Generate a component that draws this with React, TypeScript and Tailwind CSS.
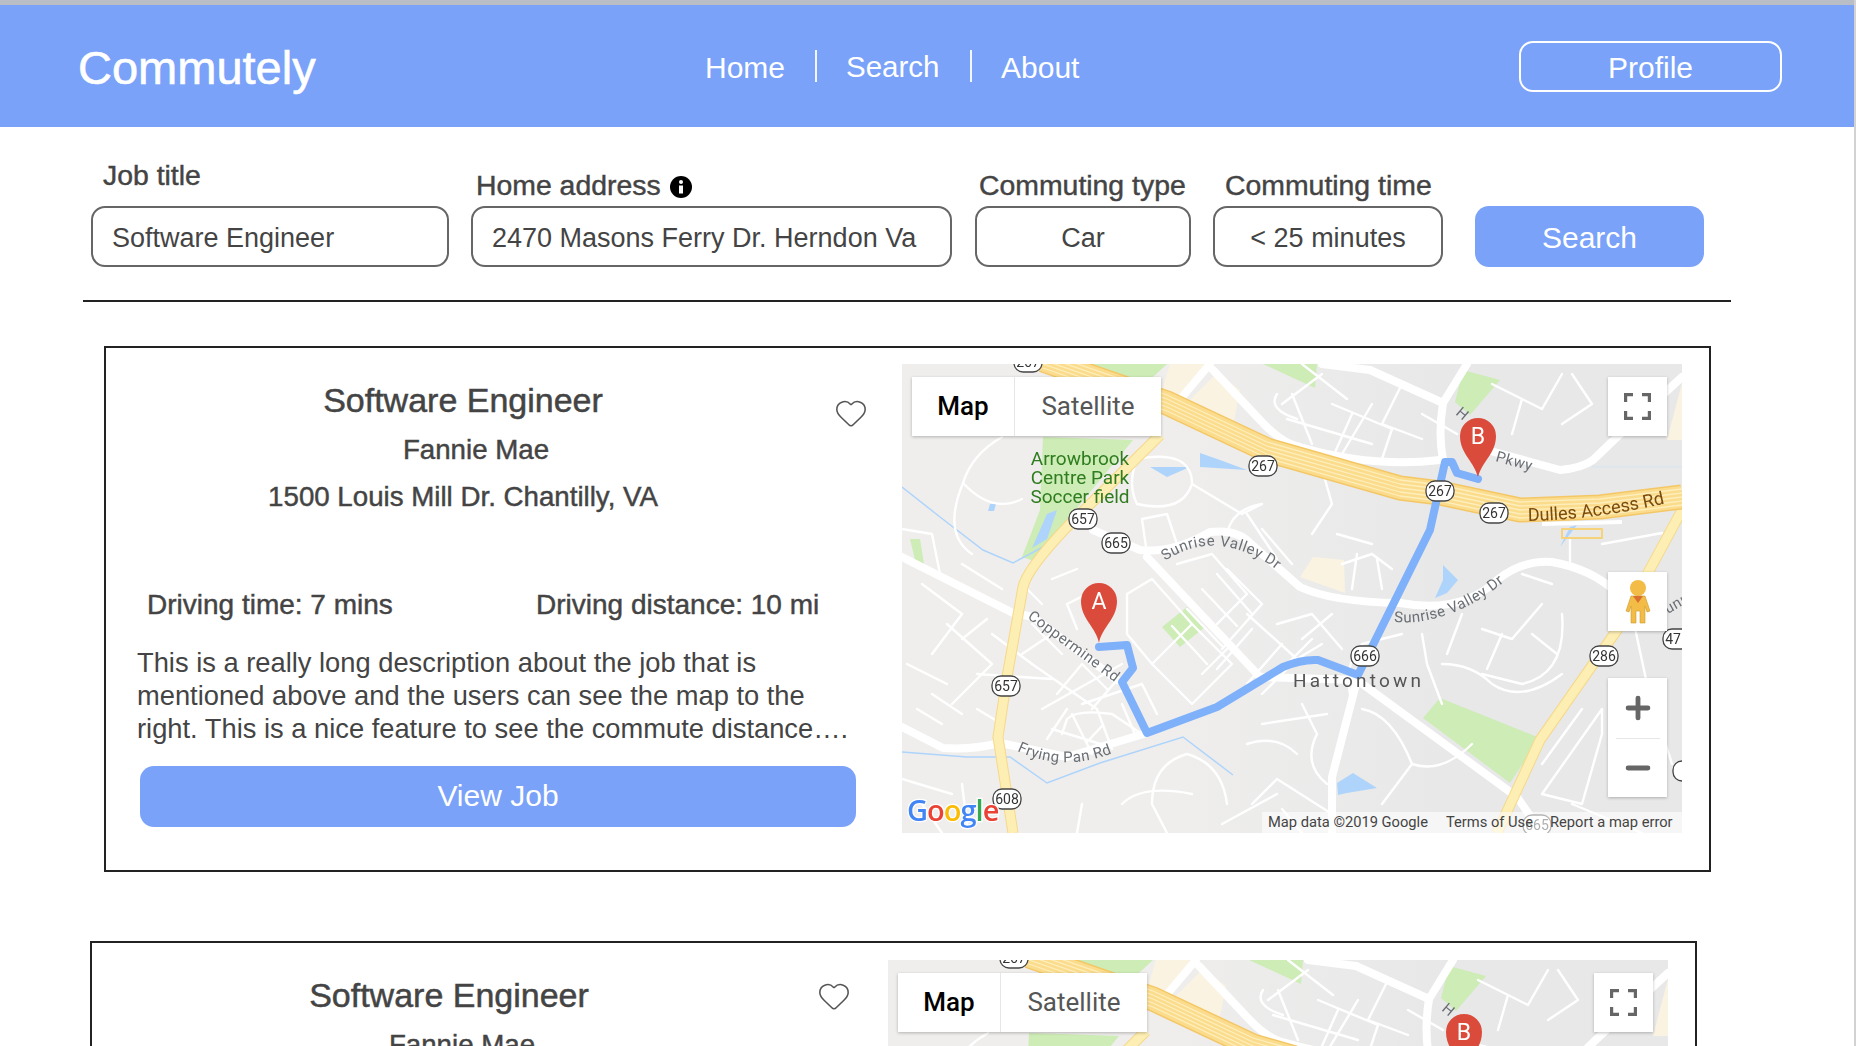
import React from 'react';
import { Heart, Plus, Minus } from 'lucide-react';

const SHIELDS: [number, number, string][] = [
  [126, -2, '267'],
  [181, 155, '657'],
  [214, 179, '665'],
  [361, 102, '267'],
  [463, 292, '666'],
  [104, 322, '657'],
  [105, 435, '608'],
  [538, 127, '267'],
  [592, 149, '267'],
  [702, 292, '286'],
  [775, 275, '471'],
  [785, 407, '5'],
  [635, 461, '665'],
];

// main white roads
const ROADS = [
  'M0 193 L111 249 L131 253 L215 316',
  'M191 166 L238 186 Q270 190 308 168 Q335 165 348 179 L398 223 Q430 238 498 239',
  'M498 239 Q560 250 595 216 Q620 196 650 198 Q690 205 715 229',
  'M245 193 L358 313',
  'M358 313 L455 316',
  'M455 316 L615 433 L640 469',
  'M0 363 L41 384 Q70 386 98 379 L165 393 L245 369',
  'M455 316 L430 413 L430 469',
  'M308 0 L275 39',
  'M311 6 L358 56 Q380 80 398 83 Q470 104 538 96',
  'M468 6 L541 39 L565 0',
  'M541 39 Q536 70 541 96',
  'M585 86 L658 106 Q680 104 691 96 L715 73 L780 13',
  'M420 0 L468 6',
];

// thin side streets, just enough to read as a neighbourhood
const STREETS = [
  'M61 119 Q40 170 70 190 M61 119 Q70 90 100 73 M61 119 Q90 150 120 135',
  'M0 165 L30 170 M30 170 L38 210 M38 210 L90 240 M20 220 L60 250 M60 250 L30 290',
  'M60 200 L100 225 M45 260 L90 300 M90 300 L50 340 M75 310 L150 315 M90 270 L130 300',
  'M165 240 L195 225 M165 240 L175 265 M130 300 L195 345 M140 345 L220 300',
  'M225 230 L250 215 L290 260 L250 300 L225 270 Z M250 300 L290 340 M290 260 L330 300 L290 340',
  'M275 200 L310 190 L345 230 L310 265 M325 205 L360 240 L320 285 M345 250 L395 295 L360 330 M395 295 L420 280',
  'M235 95 Q290 85 290 120 Q280 150 235 140 Q225 120 235 95 M290 120 L340 150 L360 140',
  'M240 155 L265 150 L275 180 L245 190 Z M325 170 Q330 145 360 140',
  'M160 370 L165 355 Q175 345 210 350 L240 370 M170 350 L190 390 M195 345 L210 385 M220 340 L235 375',
  'M180 340 L240 320 M215 316 L190 345 M240 320 L255 350',
  'M285 390 Q250 400 250 440 L265 469 M285 390 Q320 400 325 440 M350 440 L375 415 L430 450',
  'M320 460 L375 430 M360 360 L425 350 M400 340 L415 370 Q400 400 425 420',
  'M400 0 L445 35 M375 30 Q365 45 395 55 M430 40 L490 65 L480 95 M450 50 L430 95',
  'M500 20 L480 60 L520 75 M520 50 L555 70',
  'M590 20 L640 45 L660 10 M670 10 L690 40 L660 60 M620 35 L610 70',
  'M668 175 L668 200 M620 210 L650 220',
  'M580 265 L610 275 M610 275 L640 240 M660 250 Q665 310 620 320 L580 310 M540 300 Q570 300 590 320 Q620 340 660 310',
  'M520 270 L525 300 L540 340 M500 270 L460 280 Q440 300 450 340',
  'M460 345 Q490 350 510 400 L480 440 M510 400 Q540 410 570 380',
  'M700 370 L680 440 L640 430 L700 345 Z M670 440 L740 469',
  'M700 180 L760 169 M730 250 L745 320 L770 400',
  'M380 40 L420 10 M385 55 L470 80 M410 80 L390 30 M440 90 L470 40',
  'M300 225 L335 262 M315 210 L350 250 M285 245 L320 282 M270 262 L305 300 M330 280 L300 310 M350 265 L315 305',
  'M375 260 L410 250 L440 285 M400 275 L430 250 M380 280 L345 320 M410 275 L385 300',
  'M180 300 L205 325 M155 330 L180 300 M165 345 L145 375 M200 362 L185 378 M150 365 L205 382',
  'M30 330 L60 350 M5 300 L45 320 M15 345 L40 360 M75 345 L100 360 M60 275 L85 255',
  'M120 290 L150 270 M130 260 L160 290 M140 240 L120 220 M150 215 L175 205',
  'M440 200 L470 190 L490 205 M450 225 L455 190 M475 195 L480 225',
  'M390 200 L360 165 M375 195 L345 150 M410 170 L430 140 L420 105 M435 170 L470 180',
  'M600 270 L585 305 M630 270 L655 290 M560 250 L545 290 M640 400 L680 345',
  'M220 440 Q240 420 290 430 M180 440 L175 469 M345 380 Q375 370 395 390 M380 445 L400 469',
  'M20 440 L40 469 M60 420 L65 460 M0 415 L50 430',
];

const SIDE_POLY = [
  '141,73 231,76 165,156 138,199 120,193 138,146',
  '178,0 265,0 251,13 205,13',
  '361,0 415,0 413,24',
  '561,6 598,16 568,51 553,38',
  '285,243 303,263 278,283 260,263',
  '538,334 638,374 608,419 521,354',
  '8,175 18,175 22,200 14,200',
];

const CREAM_POLY = [
  '268,0 303,0 278,39 258,33',
  '315,9 338,26 331,62 285,39',
  '411,193 442,196 443,229 398,213',
  '780,19 780,76 765,76',
];

const WATER_POLY = [
  '298,89 318,96 345,106 298,103',
  '248,103 288,103 265,113',
  '435,419 451,409 475,424 445,429 436,431',
  '541,201 556,216 545,229 533,234 541,216',
  '675,161 658,183 668,163',
  '145,150 155,146 145,175 130,184',
  '88,140 94,140 92,147 86,147',
];

function Shield({ x, y, label }: { x: number; y: number; label: string }) {
  return (
    <g>
      <rect x={x - 14} y={y - 10} width={28} height={20} rx={9} fill="#fff" stroke="#444" strokeWidth={1.3} />
      <text x={x} y={y + 5} textAnchor="middle" fontFamily="Roboto, sans-serif" fontSize={14} fill="#333">
        {label}
      </text>
    </g>
  );
}

function Marker({ x, y, letter }: { x: number; y: number; letter: string }) {
  return (
    <g>
      <path
        d={`M${x} ${y} C${x - 3} ${y - 16} ${x - 18} ${y - 24} ${x - 18} ${y - 42} A18 18 0 0 1 ${x + 18} ${y - 42} C${x + 18} ${y - 24} ${x + 3} ${y - 16} ${x} ${y} Z`}
        fill="#db4b3b"
      />
      <text x={x} y={y - 34} textAnchor="middle" fontFamily="Roboto, sans-serif" fontSize={23} fill="#fff">
        {letter}
      </text>
    </g>
  );
}

function MapPicture() {
  return (
    <svg width={780} height={469} viewBox="0 0 780 469" className="block blur-[0.35px]">
      <defs>
        <linearGradient id="land" x1="0" x2="1" y1="0" y2="0">
          <stop offset="0.35" stopColor="#efeeed" />
          <stop offset="0.7" stopColor="#e8e8e8" />
        </linearGradient>
        <path id="lbl-sunrise1" d="M263 197 Q310 165 367 200 L400 225" />
        <path id="lbl-copper" d="M125 254 L230 331" />
        <path id="lbl-frying" d="M115 387 Q160 408 208 390 L240 378" />
        <path id="lbl-sunrise2" d="M492 258 Q545 262 597 222 L620 205" />
        <path id="lbl-dulles" d="M626 157 Q690 156 761 140 L790 134" />
        <path id="lbl-pkwy" d="M593 97 L650 113" />
      </defs>
      <rect width={780} height={469} fill="url(#land)" />
      {SIDE_POLY.map((p) => (
        <polygon key={p} points={p} fill="#cdecb6" />
      ))}
      {CREAM_POLY.map((p) => (
        <polygon key={p} points={p} fill="#faf3e1" />
      ))}
      {WATER_POLY.map((p) => (
        <polygon key={p} points={p} fill="#aed4fb" />
      ))}
      <path d="M0 123 L38 153 L81 186 L111 199 L141 183" fill="none" stroke="#aed4fb" strokeWidth={1.5} />
      <path d="M0 388 L65 393 L108 393 L145 419 L198 399 L281 373 L331 411" fill="none" stroke="#aed4fb" strokeWidth={1.5} />
      <path d="M690 103 L780 103" fill="none" stroke="#d3e3f3" strokeWidth={1} />

      <g fill="none" stroke="#fff" strokeWidth={2.4} strokeLinejoin="round" strokeLinecap="round">
        {STREETS.map((d) => (
          <path key={d} d={d} />
        ))}
      </g>
      <g fill="none" stroke="#fff" strokeWidth={8} strokeLinejoin="round" strokeLinecap="round">
        {ROADS.map((d) => (
          <path key={d} d={d} />
        ))}
      </g>

      {/* 657 and 286 */}
      <g fill="none" strokeLinejoin="round">
        <path d="M258 71 L165 163 Q125 205 121 223 L105 313 L96 373 L111 469" stroke="#f6d889" strokeWidth={11} />
        <path d="M258 71 L165 163 Q125 205 121 223 L105 313 L96 373 L111 469" stroke="#fdeeb4" strokeWidth={9} />
        <path d="M780 146 L715 266 L638 376 L595 469" stroke="#f6d889" strokeWidth={11} />
        <path d="M780 146 L715 266 L638 376 L595 469" stroke="#fdeeb4" strokeWidth={9} />
        <path d="M141 -4 L265 39 L365 86 L498 124 L538 129 L618 146 L698 143 L780 133" stroke="#f4c766" strokeWidth={25} />
        <path d="M141 -4 L265 39 L365 86 L498 124 L538 129 L618 146 L698 143 L780 133" stroke="#fbdc8d" strokeWidth={22} />
        <g stroke="#fdeebc" strokeWidth={1.3}>
          <path d="M141 -12 L265 31 L365 78 L498 116 L538 121 L618 138 L698 135 L780 125" />
          <path d="M141 -8 L265 35 L365 82 L498 120 L538 125 L618 142 L698 139 L780 129" />
          <path d="M141 -4 L265 39 L365 86 L498 124 L538 129 L618 146 L698 143 L780 133" />
          <path d="M141 0 L265 43 L365 90 L498 128 L538 133 L618 150 L698 147 L780 137" />
          <path d="M141 4 L265 47 L365 94 L498 132 L538 137 L618 154 L698 151 L780 141" />
        </g>
        <path d="M660 165 L700 165 L700 174 L660 174 Z" stroke="#f6d27a" strokeWidth={2} />
        <path d="M640 160 L720 158" stroke="#fff" strokeWidth={4} />
      </g>

      {/* route */}
      <path
        d="M197 283 L225 281 L231 304 L220 318 L245 369 L315 343 L381 303 Q400 295 416 296 L456 311 L528 166 L543 98 L550 98 L555 109 L576 115"
        fill="none"
        stroke="#7fb0fa"
        strokeWidth={8}
        strokeLinejoin="round"
        strokeLinecap="round"
      />

      {SHIELDS.map(([x, y, label], i) => (
        <Shield key={i} x={x} y={y} label={label} />
      ))}

      <g fontFamily="Roboto, sans-serif" fontSize={19} fill="#2f7d1f" textAnchor="middle">
        <text x={178} y={101}>Arrowbrook</text>
        <text x={178} y={120}>Centre Park</text>
        <text x={178} y={139}>Soccer field</text>
      </g>
      <text x={391} y={323} fontFamily="Roboto, sans-serif" fontSize={19} letterSpacing={3.2} fill="#555">
        Hattontown
      </text>
      <g fontFamily="Roboto, sans-serif" fontSize={15} fill="#6a6f75" letterSpacing={0.5}>
        <text><textPath href="#lbl-sunrise1">Sunrise Valley Dr</textPath></text>
        <text><textPath href="#lbl-copper">Coppermine Rd</textPath></text>
        <text><textPath href="#lbl-frying">Frying Pan Rd</textPath></text>
        <text><textPath href="#lbl-sunrise2">Sunrise Valley Dr</textPath></text>
        <text><textPath href="#lbl-pkwy">Pkwy</textPath></text>
        <text transform="translate(553 50) rotate(40)">H</text>
        <text transform="translate(766 250) rotate(-30)">unr</text>
      </g>
      <text fontFamily="Roboto, sans-serif" fontSize={18} fill="#7a4a0f">
        <textPath href="#lbl-dulles">Dulles Access Rd</textPath>
      </text>

      <Marker x={197} y={279} letter="A" />
      <Marker x={576} y={114} letter="B" />
      <circle cx={576} cy={115} r={3} fill="#7fb0fa" />

      <text x={5} y={457} fontFamily="'Open Sans', sans-serif" fontWeight={600} fontSize={29} letterSpacing={-1} stroke="#fff" strokeWidth={2.5} style={{ paintOrder: 'stroke' }}>
        <tspan fill="#4285f4">G</tspan>
        <tspan fill="#ea4335">o</tspan>
        <tspan fill="#fbbc05">o</tspan>
        <tspan fill="#4285f4">g</tspan>
        <tspan fill="#34a853">l</tspan>
        <tspan fill="#ea4335">e</tspan>
      </text>
    </svg>
  );
}

function MapPanel() {
  const tile = 'absolute right-[15px] w-[59px] bg-white shadow-[0_1px_3px_rgba(0,0,0,0.25)] flex items-center justify-center';

  return (
    <div className="relative h-[469px] w-[780px] overflow-hidden font-['Roboto',sans-serif]">
      <MapPicture />

      <div className="absolute left-[10px] top-[13px] flex h-[59px] w-[249px] bg-white text-[26px] shadow-[0_1px_3px_rgba(0,0,0,0.25)]">
        <div className="flex w-[103px] items-center justify-center border-r border-[#e6e6e6] font-medium text-black">Map</div>
        <div className="flex flex-1 items-center justify-center text-[#565656]">Satellite</div>
      </div>

      <div className={`${tile} top-[13px] h-[59px]`}>
        <svg width="27" height="27" viewBox="0 0 27 27" fill="none" stroke="#666" strokeWidth="3.2">
          <path d="M1.6 9 V1.6 H9 M18 1.6 H25.4 V9 M25.4 18 V25.4 H18 M9 25.4 H1.6 V18" />
        </svg>
      </div>

      <div className={`${tile} top-[208px] h-[59px]`}>
        <svg width="26" height="44" viewBox="0 0 26 44">
          <circle cx="13" cy="8" r="8" fill="#f2bc47" />
          <path d="M6 16 H20 L25 31 L22 32 L20 26 V43 H15 V31 H11 V43 H6 V26 L4 32 L1 31 Z" fill="#f2bc47" stroke="#c99a30" strokeWidth="0.6" />
          <path d="M8 16 H18 L13 23 Z" fill="#d9702f" />
        </svg>
      </div>

      <div className={`${tile} top-[314px] h-[119px] flex-col`}>
        <div className="flex h-[60px] w-full items-center justify-center">
          <Plus className="h-[34px] w-[34px] text-[#666]" strokeWidth={3.4} />
        </div>
        <div className="h-px w-[44px] bg-[#e6e6e6]" />
        <div className="flex h-[58px] w-full items-center justify-center">
          <Minus className="h-[34px] w-[34px] text-[#666]" strokeWidth={3.4} />
        </div>
      </div>

      <div className="absolute bottom-0 right-0 flex h-[21px] w-[420px] items-center bg-white/60 pl-[6px] text-[14.7px] text-[#444]">
        <span className="w-[178px] whitespace-nowrap">Map data ©2019 Google</span>
        <span className="w-[104px] whitespace-nowrap">Terms of Use</span>
        <span className="whitespace-nowrap">Report a map error</span>
      </div>
    </div>
  );
}

function JobCard({ className, heartClass, mapClass }: { className: string; heartClass: string; mapClass: string }) {
  return (
    <div className={`flex h-[526px] w-[1607px] shrink-0 border-2 border-[#222] ${className}`}>
      <div className="relative w-[796px] shrink-0 text-[#444]">
        <Heart className={`absolute h-[34px] w-[34px] text-[#555] ${heartClass}`} strokeWidth={1.1} />

        <div className="mt-[32px] w-[714px] text-center text-[34px] leading-[40px] [-webkit-text-stroke:0.5px]">Software Engineer</div>
        <div className="mt-[14px] w-[740px] text-center text-[27.7px] leading-[32px] [-webkit-text-stroke:0.45px]">Fannie Mae</div>
        <div className="mt-[15px] w-[714px] text-center text-[27.7px] leading-[32px] [-webkit-text-stroke:0.45px]">1500 Louis Mill Dr. Chantilly, VA</div>

        <div className="mt-[76px] flex pl-[41px] text-[28px] leading-[32px] [-webkit-text-stroke:0.45px]">
          <span className="w-[389px]">Driving time: 7 mins</span>
          <span>Driving distance: 10 mi</span>
        </div>

        <p className="mt-[25px] whitespace-nowrap pl-[31px] text-[27.3px] leading-[33px]">
          This is a really long description about the job that is
          <br />
          mentioned above and the users can see the map to the
          <br />
          right. This is a nice feature to see the commute distance….
        </p>

        <div className="ml-[34px] mt-[21px] flex h-[61px] w-[716px] items-center justify-center rounded-[14px] bg-[#7aa2f9] pb-[2px] text-[30px] text-white">
          View Job
        </div>
      </div>

      <div className={mapClass}>
        <MapPanel />
      </div>
    </div>
  );
}

export default function App() {
  const label = 'text-[28.4px] leading-[32px] text-[#444] [-webkit-text-stroke:0.45px]';
  const box = 'flex h-[61px] items-center rounded-[14px] border-2 border-[#666] pt-[3px] text-[27px] text-[#444]';

  return (
    <div className="h-[1046px] w-full overflow-hidden border-r-2 border-[#d2d2d2] bg-white font-['Liberation_Sans',Arial,sans-serif]">
      <div className="h-[5px] bg-[#b9bdc6]" />

      {/* HEADER */}
      <header className="flex h-[122px] items-center bg-[#7aa2f9] text-white">
        <div className="ml-[78px] w-[627px] pt-[2px] text-[47px] leading-none [-webkit-text-stroke:0.6px]">Commutely</div>
        <nav className="flex w-[814px] items-center text-[30px]">
          <span className="w-[110px] pt-[2px]">Home</span>
          <span className="h-[32px] w-[2px] bg-white/90" />
          <span className="w-[153px] whitespace-nowrap pl-[29px] pt-[2px] text-[29.5px]">Search</span>
          <span className="h-[32px] w-[2px] bg-white/90" />
          <span className="pl-[29px] pt-[2px]">About</span>
        </nav>
        <div className="flex h-[51px] w-[263px] items-center justify-center rounded-[14px] border-2 border-white pt-[2px] text-[30px]">Profile</div>
      </header>

      {/* SEARCH FORM */}
      <div className="flex items-end pl-[91px] pt-[32px]">
        <div className="flex w-[358px] flex-col">
          <span className={`${label} mb-[15px] pl-[12px]`}>Job title</span>
          <div className={`${box} pl-[19px]`}>Software Engineer</div>
        </div>
        <div className="ml-[22px] flex w-[481px] flex-col">
          <span className={`${label} mb-[5px] flex items-center pl-[5px]`}>
            Home address
            <svg width="22" height="22" viewBox="0 0 22 22" className="ml-[9px] mt-[3px]">
              <circle cx="11" cy="11" r="11" fill="#000" />
              <circle cx="11" cy="6" r="2" fill="#fff" />
              <rect x="9" y="9.5" width="4" height="8" fill="#fff" />
            </svg>
          </span>
          <div className={`${box} pl-[19px]`}>2470 Masons Ferry Dr. Herndon Va</div>
        </div>
        <div className="ml-[23px] flex w-[216px] flex-col">
          <span className={`${label} mb-[5px] whitespace-nowrap pl-[4px]`}>Commuting type</span>
          <div className={`${box} justify-center`}>Car</div>
        </div>
        <div className="ml-[22px] flex w-[230px] flex-col">
          <span className={`${label} mb-[5px] whitespace-nowrap pl-[12px]`}>Commuting time</span>
          <div className={`${box} justify-center`}>&lt; 25 minutes</div>
        </div>
        <div className="ml-[32px] flex h-[61px] w-[229px] items-center justify-center rounded-[14px] bg-[#7aa2f9] pt-[2px] text-[30px] text-white">Search</div>
      </div>

      <div className="ml-[83px] mt-[33px] h-[2px] w-[1648px] bg-[#222]" />

      <JobCard className="ml-[104px] mt-[44px]" heartClass="left-[728px] top-[48px]" mapClass="pt-[16px]" />
      <JobCard className="ml-[90px] mt-[69px]" heartClass="left-[725px] top-[36px]" mapClass="pt-[17px]" />
    </div>
  );
}
